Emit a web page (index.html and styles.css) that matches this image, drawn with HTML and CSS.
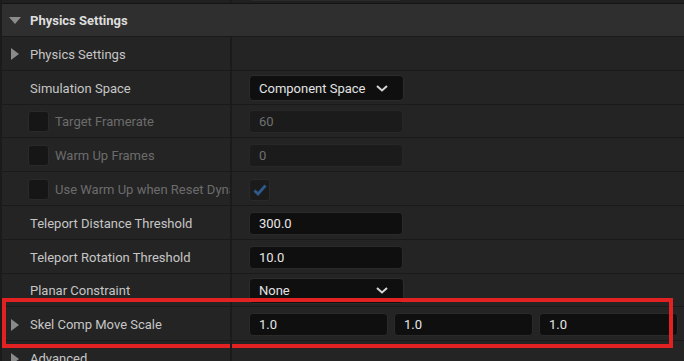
FILE: index.html
```html
<!DOCTYPE html>
<html lang="en">
<head>
    <meta charset="UTF-8">
    <title>Details - Physics Settings</title>
    <link rel="stylesheet" href="styles.css">
</head>
<body>
    <div class="panel">
        <div class="row top">
            <div class="name"></div>
            <div class="value"><div class="field"></div></div>
        </div>

        <div class="category">
            <span class="arrow-down"></span>
            <span class="title">Physics Settings</span>
        </div>

        <div class="row">
            <div class="name"><span class="arrow-right"></span>Physics Settings</div>
            <div class="value"></div>
        </div>

        <div class="row">
            <div class="name">Simulation Space</div>
            <div class="value">
                <div class="combo">
                    <span>Component Space</span>
                    <svg width="12" height="7" viewBox="0 0 12 7"><path d="M1 1 L6 5.5 L11 1" fill="none" stroke="#d6d6d6" stroke-width="2"/></svg>
                </div>
            </div>
        </div>

        <div class="row disabled">
            <div class="name"><span class="check"></span>Target Framerate</div>
            <div class="value"><div class="field">60</div></div>
        </div>

        <div class="row disabled">
            <div class="name"><span class="check"></span>Warm Up Frames</div>
            <div class="value"><div class="field">0</div></div>
        </div>

        <div class="row disabled">
            <div class="name"><span class="check"></span>Use Warm Up when Reset Dynamics</div>
            <div class="value">
                <span class="check checked">
                    <svg width="14" height="12" viewBox="0 0 14 12"><path d="M1.5 6.5 L5 10 L12.5 1.5" fill="none" stroke="#2d5a8a" stroke-width="2.8"/></svg>
                </span>
            </div>
        </div>

        <div class="row">
            <div class="name">Teleport Distance Threshold</div>
            <div class="value"><div class="field">300.0</div></div>
        </div>

        <div class="row">
            <div class="name">Teleport Rotation Threshold</div>
            <div class="value"><div class="field">10.0</div></div>
        </div>

        <div class="row">
            <div class="name">Planar Constraint</div>
            <div class="value">
                <div class="combo">
                    <span>None</span>
                    <svg width="12" height="7" viewBox="0 0 12 7"><path d="M1 1 L6 5.5 L11 1" fill="none" stroke="#d6d6d6" stroke-width="2"/></svg>
                </div>
            </div>
        </div>

        <div class="row highlight">
            <div class="name"><span class="arrow-right"></span>Skel Comp Move Scale</div>
            <div class="value vector">
                <div class="field">1.0</div>
                <div class="field">1.0</div>
                <div class="field">1.0</div>
            </div>
        </div>

        <div class="row">
            <div class="name"><span class="arrow-right"></span>Advanced</div>
            <div class="value"></div>
        </div>
    </div>
</body>
</html>
```

FILE: styles.css
```css
/* Base */
body {
    margin: 0;
    background-color: #242424;
    font-family: Roboto, "Liberation Sans", sans-serif;
    font-size: 13px;
    color: #c6c6c6;
    overflow: hidden;
}

.panel {
    border-left: 2px solid #1b1b1b;
    background-color: #242424;
}

/* Property rows */
.row {
    display: flex;
    height: 33.8px;
    box-sizing: border-box;
    padding-top: 2px;
    border-bottom: 1px solid #1a1a1a;
    position: relative;
}

.row .name {
    width: 230px;
    flex-shrink: 0;
    box-sizing: border-box;
    padding-left: 28px;
    display: flex;
    align-items: center;
    white-space: nowrap;
    overflow: hidden;
    border-right: 2px solid #1b1b1b;
    margin-top: -2px;
    padding-top: 2px;
}

.row .value {
    flex: 1;
    display: flex;
    align-items: center;
    padding-left: 17px;
    padding-right: 6px;
    min-width: 0;
}

.row.top {
    height: 4px;
    padding-top: 0;
    background-color: #202020;
    border-bottom: 1px solid #141414;
    overflow: hidden;
}

.row.top .name {
    margin-top: 0;
}

.row.top .value {
    align-items: flex-end;
}

.row.top .field {
    margin-bottom: 2px;
    background-color: #1c1c1c;
}

/* Category header */
.category {
    height: 32px;
    display: flex;
    align-items: center;
    background-color: #2f2f2f;
    border-bottom: 1px solid #1a1a1a;
    padding-left: 7px;
}

.category .title {
    font-weight: bold;
    color: #dedede;
}

.arrow-down {
    width: 0;
    height: 0;
    border-left: 6px solid transparent;
    border-right: 6px solid transparent;
    border-top: 7px solid #8c8c8c;
    margin-right: 9px;
    margin-top: 1px;
}

.arrow-right {
    position: absolute;
    left: 9px;
    width: 0;
    height: 0;
    border-top: 6px solid transparent;
    border-bottom: 6px solid transparent;
    border-left: 8px solid #8a8a8a;
}

/* Inputs */
.field {
    width: 154px;
    height: 23px;
    box-sizing: border-box;
    background-color: #0f0f0f;
    border: 1px solid #2a2a2a;
    border-radius: 4px;
    padding-left: 9px;
    display: flex;
    align-items: center;
    color: #e6e6e6;
}

.combo {
    width: 155px;
    height: 26px;
    box-sizing: border-box;
    background-color: #0f0f0f;
    border: 1px solid #2c2c2c;
    border-radius: 4px;
    padding-left: 9px;
    padding-right: 15px;
    display: flex;
    align-items: center;
    justify-content: space-between;
    color: #e2e2e2;
}

.vector {
    gap: 6px;
}

.vector .field {
    flex: 1;
    width: auto;
}

/* Checkboxes */
.check {
    width: 21px;
    height: 21px;
    flex-shrink: 0;
    box-sizing: border-box;
    background-color: #161616;
    border: 1px solid #2a2a2a;
    border-radius: 3px;
    margin-right: 6px;
    display: flex;
    align-items: center;
    justify-content: center;
}

.check.checked {
    background-color: #1b1b1b;
    height: 22px;
}

/* Disabled rows */
.row.disabled .name {
    color: #6c6c6c;
    padding-left: 26px;
}

.row.disabled .field {
    background-color: #1b1b1b;
    border-color: #272727;
    color: #707070;
}

/* Red highlight around the row */
.row.highlight::after {
    content: "";
    position: absolute;
    top: -9px;
    bottom: -8px;
    left: 0px;
    right: 11px;
    border: 4px solid #e22222;
    pointer-events: none;
}
```
